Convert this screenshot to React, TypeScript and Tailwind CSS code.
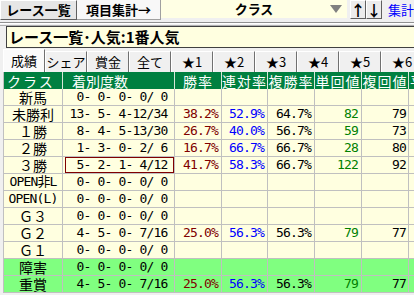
import React from "react";

type Row = {
  c: string;
  mono?: boolean;
  d: string;
  w?: string;
  r?: string;
  f?: string;
  t?: string;
  h?: string;
  green?: boolean;
  sel?: boolean;
};

const Z = " 0- 0- 0- 0/ 0";
const rows: Row[] = [
  { c: "新馬", d: Z },
  { c: "未勝利", d: "13- 5- 4-12/34", w: "38.2%", r: "52.9%", f: "64.7%", t: "82", h: "79" },
  { c: "１勝", d: " 8- 4- 5-13/30", w: "26.7%", r: "40.0%", f: "56.7%", t: "59", h: "73" },
  { c: "２勝", d: " 1- 3- 0- 2/ 6", w: "16.7%", r: "66.7%", f: "66.7%", t: "28", h: "80" },
  { c: "３勝", d: " 5- 2- 1- 4/12", w: "41.7%", r: "58.3%", f: "66.7%", t: "122", h: "92", sel: true },
  { c: "OPEN非L", mono: true, d: Z },
  { c: "OPEN(L)", mono: true, d: Z },
  { c: "Ｇ３", d: Z },
  { c: "Ｇ２", d: " 4- 5- 0- 7/16", w: "25.0%", r: "56.3%", f: "56.3%", t: "79", h: "77" },
  { c: "Ｇ１", d: Z },
  { c: "障害", d: Z, green: true },
  { c: "重賞", d: " 4- 5- 0- 7/16", w: "25.0%", r: "56.3%", f: "56.3%", t: "79", h: "77", green: true },
];

const tabs = ["成績", "シェア", "賞金", "全て", "★1", "★2", "★3", "★4", "★5", "★6"];

const cols = "grid grid-cols-[59px_112px_47px_46px_47px_47px_47px_47px]";
const cjk = "font-['Noto_Sans_CJK_JP','Noto_Sans',sans-serif]";
const mono =
  "font-['DejaVu_Sans_Mono','Noto_Sans_CJK_JP',monospace] text-[13px] leading-[16px] tracking-[-0.83px] whitespace-pre";

function Cell({
  children,
  className = "",
}: {
  children?: React.ReactNode;
  className?: string;
}) {
  return (
    <div
      className={`h-[17px] border-r border-b border-[#c0c0c0] flex items-center overflow-hidden ${className}`}
    >
      {children}
    </div>
  );
}

const btn3d =
  "border-t border-l border-white border-r border-b border-r-[#606060] border-b-[#606060]";

export default function App() {
  return (
    <div className={`w-[414px] h-[295px] overflow-hidden bg-[#f0f0f0] text-black ${cjk}`}>
      {/* top bar */}
      <div className="flex h-[20px] items-start w-[414px] overflow-hidden">
        <div
          className={`w-[77px] shrink-0 h-[20px] bg-[#e6e6e6] ${btn3d} flex items-center justify-center text-[13px] font-bold leading-[16px]`}
        >
          レース一覧
        </div>
        <div className="w-[84px] shrink-0 h-[20px] bg-[#f8f8f8] border-r border-b border-r-[#a0a0a0] border-b-[#a0a0a0] flex items-center justify-center text-[13px] font-bold leading-[16px]">
          項目集計→
        </div>
        <div className="relative w-[186px] shrink-0 h-[18px] bg-[#ffffe4] flex items-center justify-center text-[13px] font-bold leading-[16px]">
          クラス
          <svg className="absolute left-[169px] top-[5px]" width="12" height="8" viewBox="0 0 12 8">
            <polygon points="0,0 12,0 6,8" fill="#808080" />
          </svg>
        </div>
        <div className="ml-[3px] flex shrink-0">
          <div
            className={`w-[16px] h-[19px] bg-[#ececec] ${btn3d} flex items-center justify-center text-[15px] font-bold leading-[16px]`}
          >
            ↑
          </div>
          <div
            className={`w-[16px] h-[19px] bg-[#ececec] ${btn3d} flex items-center justify-center text-[15px] font-bold leading-[16px]`}
          >
            ↓
          </div>
        </div>
        <div className="ml-[6px] shrink-0 h-[19px] flex items-center text-[13px] text-[#0000ff] whitespace-nowrap leading-[16px]">
          集計→
        </div>
      </div>
      {/* separator lines */}
      <div className="h-[6px] flex flex-col">
        <div className="h-[2px]" />
        <div className="h-[1px] bg-[#909090]" />
        <div className="h-[1px] bg-white" />
        <div className="h-[1px]" />
        <div className="h-[1px] bg-[#b0b0b0]" />
      </div>
      {/* title box */}
      <div className="ml-[6px] h-[22px] bg-[#ffffe0] border border-[#404040] border-r-0 flex items-center pl-[2px] text-[15px] font-bold leading-[18px] whitespace-nowrap">
        レース一覧･人気:1番人気
      </div>
      {/* tabs */}
      <div className="h-[24px] flex items-end pl-[3px] w-[414px] overflow-hidden">
        {tabs.map((t, i) => (
          <div
            key={t}
            className={`${
              i === 0 ? "h-[23px] bg-[#fafafa]" : "h-[21px] bg-[#f0f0f0]"
            } w-[42px] border-t border-l border-white border-r border-r-[#707070] flex items-center justify-center text-[13px] leading-[16px] shrink-0`}
          >
            {t}
          </div>
        ))}
      </div>
      {/* table */}
      <div className="ml-[3px] border-l border-[#c0c0c0]">
        <div className={`${cols} bg-[#008040] text-white text-[14px] leading-[16px]`}>
          {["クラス", "着別度数", "勝率", "連対率", "複勝率", "単回値", "複回値", "平均"].map((h, i) => (
            <div
              key={h}
              className={`h-[17px] border-r border-[#d8e8d8] flex items-center overflow-hidden whitespace-nowrap ${
                i === 0
                  ? "pl-[3px] tracking-[2px]"
                  : i === 1
                  ? "pl-[9px]"
                  : i === 7
                  ? "pl-[1px]"
                  : "justify-center tracking-[1px]"
              }`}
            >
              {h}
            </div>
          ))}
        </div>
        {rows.map((r) => (
          <div key={r.c} className={`${cols} ${r.green ? "bg-[#80ff80]" : "bg-[#ffffe0]"}`}>
            <Cell className="justify-center">
              {r.mono ? (
                <span className={mono}>{r.c}</span>
              ) : (
                <span className="text-[14px] leading-[16px]">{r.c}</span>
              )}
            </Cell>
            <Cell className="pl-[2px]">
              <div
                className={`w-full h-[16px] flex items-center justify-center pr-[2px] ${
                  r.sel ? "border border-[#800000]" : ""
                }`}
              >
                <span className={mono}>{r.d}</span>
              </div>
            </Cell>
            <Cell className="justify-end pr-[3px] text-[#800000]">
              <span className={mono}>{r.w ?? ""}</span>
            </Cell>
            <Cell className="justify-end pr-[3px] text-[#0000ff]">
              <span className={mono}>{r.r ?? ""}</span>
            </Cell>
            <Cell className="justify-end pr-[3px]">
              <span className={mono}>{r.f ?? ""}</span>
            </Cell>
            <Cell className="justify-end pr-[3px] text-[#008000]">
              <span className={mono}>{r.t ?? ""}</span>
            </Cell>
            <Cell className="justify-end pr-[2px]">
              <span className={mono}>{r.h ?? ""}</span>
            </Cell>
            <Cell />
          </div>
        ))}
      </div>
    </div>
  );
}
